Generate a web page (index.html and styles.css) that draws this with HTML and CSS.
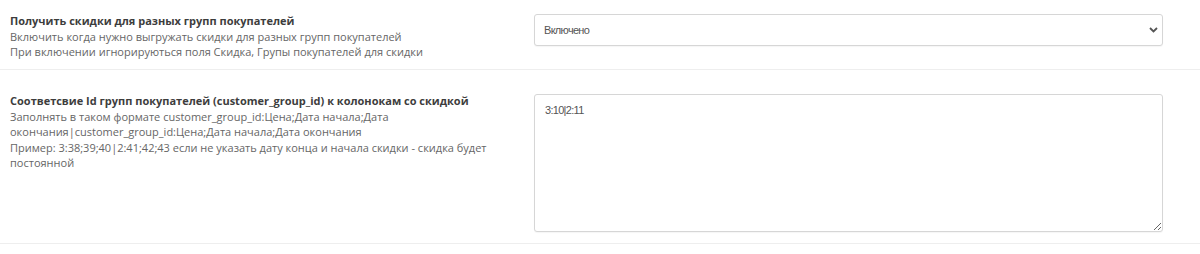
FILE: index.html
```html
<!DOCTYPE html>
<html lang="ru">
<head>
    <meta charset="UTF-8">
    <title>Настройки скидок</title>
    <link rel="stylesheet" href="styles.css">
</head>
<body>

<div class="settings">

    <!-- Скидки для групп -->
    <div class="form-group first">
        <div class="field-label">
            <div class="title">Получить скидки для разных групп покупателей</div>
            <div class="help">Включить когда нужно выгружать скидки для разных групп покупателей</div>
            <div class="help">При включении игнорируються поля Скидка, Групы покупателей для скидки</div>
        </div>
        <div class="field-control">
            <div class="select-wrap">
                <select class="control">
                    <option>Включено</option>
                    <option>Выключено</option>
                </select>
                <svg class="chevron" width="9" height="6" viewBox="0 0 9 6">
                    <path d="M1 1 L4.5 4.5 L8 1" fill="none" stroke="#555" stroke-width="1.8"/>
                </svg>
            </div>
        </div>
    </div>

    <!-- Соответствие групп -->
    <div class="form-group second">
        <div class="field-label">
            <div class="title">Соответсвие Id групп покупателей (customer_group_id) к колонокам со скидкой</div>
            <div class="help">Заполнять в таком формате customer_group_id:Цена;Дата начала;Дата окончания|customer_group_id:Цена;Дата начала;Дата окончания</div>
            <div class="help">Пример: 3:38;39;40|2:41;42;43 если не указать дату конца и начала скидки - скидка будет постоянной</div>
        </div>
        <div class="field-control">
            <textarea class="control area">3:10|2:11</textarea>
        </div>
    </div>

</div>

</body>
</html>
```

FILE: styles.css
```css
body {
    margin: 0;
    background-color: #fff;
    font-family: "Open Sans", Arial, sans-serif;
}
.settings {
    width: 1200px;
}
.form-group {
    display: grid;
    grid-template-columns: 524px 629px;
    padding-left: 10px;
    border-bottom: 1px solid #eeeeee;
}
.form-group.first {
    height: 70px;
    padding-top: 14px;
    box-sizing: border-box;
}
.form-group.second {
    height: 174px;
    padding-top: 24px;
    box-sizing: border-box;
}
.field-label {
    font-size: 11px;
    line-height: 15.5px;
    padding-right: 20px;
    margin-top: -1px;
}
.title {
    font-weight: bold;
    color: #3d3d3d;
}
.help {
    color: #666;
}
.select-wrap {
    position: relative;
    width: 629px;
}
.control {
    box-sizing: border-box;
    width: 629px;
    border: 1px solid #d6d6d6;
    border-radius: 3px;
    background-color: #fff;
    color: #555;
    font-family: "Liberation Sans", Arial, sans-serif;
    font-size: 11px;
    letter-spacing: -0.7px;
    box-shadow: 0 1px 1px rgba(0, 0, 0, 0.04);
    outline: none;
}
select.control {
    -webkit-appearance: none;
    appearance: none;
    height: 32px;
    padding: 0 0 0 9px;
}
.chevron {
    position: absolute;
    right: 5px;
    top: 13px;
}
.area {
    display: block;
    height: 138px;
    padding: 8px 10px;
    line-height: 15px;
    resize: vertical;
}
```
